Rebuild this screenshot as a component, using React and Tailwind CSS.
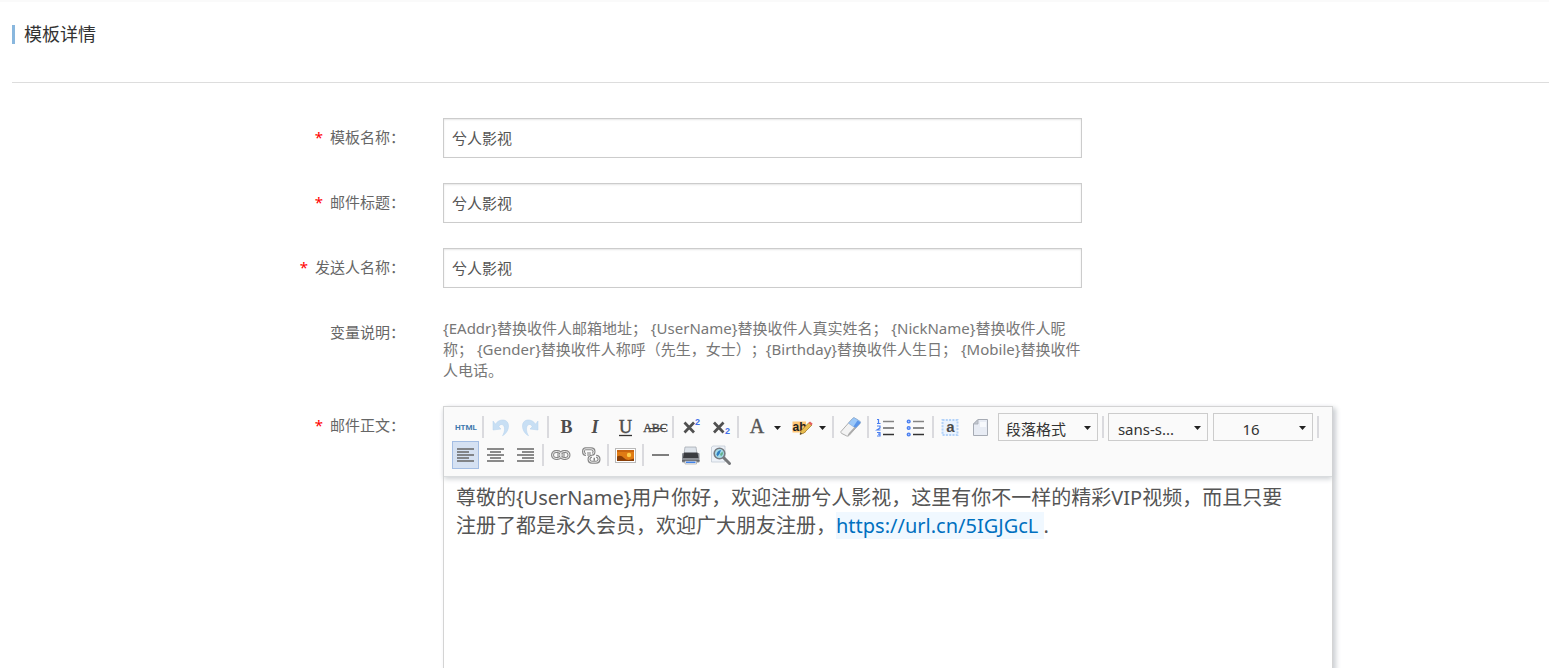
import React, { useState } from 'react'
import clsx from 'clsx'

const fields = [
  { id: 'templateName', label: '模板名称' },
  { id: 'mailTitle', label: '邮件标题' },
  { id: 'senderName', label: '发送人名称' },
]

const SERIF = '"Liberation Serif", serif'
const SANS = '"Liberation Sans", sans-serif'

const alignPaths = {
  left: 'M5 8h17M5 11h12M5 14h17M5 17h12M5 20h17',
  center: 'M5 8h17M8 11h11M5 14h17M8 17h11M5 20h17',
  right: 'M5 8h17M10 11h12M5 14h17M10 17h12M5 20h17',
}

const undoPath =
  'M6 8l2.500 3.200C11.500 5.500 21.500 5 21.500 13c0 5-3.500 8.500-6 9.700 2.500-3.700 3-10.200-.5-11.200-1.500-.4-2.700.9-3.200 2.300L14 16l-8 1z'

// Every drawing sits on a 27x28 button face
const glyphs = {
  html: (
    <text x="14" y="17" textAnchor="middle" fontFamily="Roboto, sans-serif" fontSize="8" fontWeight="700" fill="#3f78ad">HTML</text>
  ),
  undo: <path d={undoPath} fill="#c8dff4" stroke="#b5d1ec" strokeWidth=".5" />,
  redo: <path d={undoPath} transform="translate(27 0) scale(-1 1)" fill="#c8dff4" stroke="#b5d1ec" strokeWidth=".5" />,
  bold: (
    <text x="14.500" y="20" textAnchor="middle" fontFamily={SERIF} fontSize="18" fontWeight="700" fill="#4c4c4c">B</text>
  ),
  italic: (
    <text x="13" y="20" textAnchor="middle" fontFamily={SERIF} fontSize="18" fontWeight="700" fontStyle="italic" fill="#4c4c4c">I</text>
  ),
  underline: (
    <>
      <text x="13.500" y="20" textAnchor="middle" fontFamily={SERIF} fontSize="18" fontWeight="400" stroke="#4c4c4c" strokeWidth=".5" fill="#4c4c4c">U</text>
      <path d="M7 22.500h13" stroke="#333" strokeWidth="1.300" />
    </>
  ),
  strike: (
    <>
      <text x="13.500" y="19" textAnchor="middle" fontFamily={SERIF} fontSize="12" stroke="#4c4c4c" strokeWidth=".4" fill="#4c4c4c">ABC</text>
      <path d="M4 15.500h20" stroke="#444" strokeWidth="1" />
    </>
  ),
  sup: (
    <>
      <path d="M7.500 9.500l9.500 10M17 9.500l-9.500 10" stroke="#505050" strokeWidth="2.700" />
      <text x="18" y="12" fontFamily={SANS} fontSize="9" fontWeight="700" fill="#3f6fe8">2</text>
    </>
  ),
  sub: (
    <>
      <path d="M7 9.500l9.500 10M16.500 9.500L7 19.500" stroke="#505050" strokeWidth="2.700" />
      <text x="18" y="21" fontFamily={SANS} fontSize="9" fontWeight="700" fill="#3f6fe8">2</text>
    </>
  ),
  color: (
    <text x="15" y="20" textAnchor="middle" fontFamily={SERIF} fontSize="20" stroke="#555" strokeWidth=".4" fill="#555">A</text>
  ),
  highlight: (
    <>
      <path d="M5.500 8.500h13.500v11H5.500z" fill="#ffc675" />
      <text x="5.500" y="18" fontFamily={SANS} fontSize="12" fontWeight="700" fill="#222">ab</text>
      <path d="M13 21.500l1.200-4L22 9.500l3 2.500-8 8z" fill="#e8bd4f" stroke="#9a7328" strokeWidth=".7" />
      <path d="M21.500 10l1.500-1.500 2.700 2.200-1.400 1.800z" fill="#e25f5f" />
      <path d="M13 21.500l.6-2 1.400 1.200z" fill="#333" />
    </>
  ),
  eraser: (
    <>
      <path d="M4 18.500L15.500 5.500q1-1 2.200-.4l4.800 3q1.500 1 .5 2.300L12 22.500q-1 1-2.200.5l-5-2.500q-1.500-.8-.8-2z" fill="#f3f3f3" stroke="#a5a5a5" strokeWidth=".9" />
      <path d="M11.500 10.200L16 5.200q.8-.7 1.700-.1l5 3q1.200.9.3 2.100l-4.500 4.900z" fill="#9cc8f8" stroke="#84aede" strokeWidth=".7" />
      <path d="M18.500 15.100l-2-1.500 4-6 2.500 1.500q.8.500 0 1.400z" fill="#5b96ea" />
      <path d="M10.500 22.500l1.500-2.500 6-6.500.5 1.500-6.500 7.500z" fill="#aaa" />
    </>
  ),
  ol: (
    <>
      <path d="M5 6.500h1.500V10.500M5 10.500h3.500M5 13h3v2l-3 2h3.500M5 19.500h3v1.700H6h2V23H5" fill="none" stroke="#4a7ff0" strokeWidth="1.200" />
      <path d="M11 8.500h11" stroke="#858585" strokeWidth="1.500" />
      <path d="M11 15h11" stroke="#666" strokeWidth="1.500" />
      <path d="M11 21.500h11" stroke="#333" strokeWidth="1.500" />
    </>
  ),
  ul: (
    <>
      <g fill="#b6cbfb" stroke="#4a7ff0" strokeWidth="1.400">
        <circle cx="6.700" cy="8.500" r="1.400" />
        <circle cx="6.700" cy="15" r="1.400" />
        <circle cx="6.700" cy="21.500" r="1.400" />
      </g>
      <path d="M11 8.500h11" stroke="#858585" strokeWidth="1.500" />
      <path d="M11 15h11" stroke="#666" strokeWidth="1.500" />
      <path d="M11 21.500h11" stroke="#333" strokeWidth="1.500" />
    </>
  ),
  selectAll: (
    <>
      <rect x="5" y="6.500" width="16" height="16" fill="#eaf3fe" />
      <rect x="5.500" y="7" width="15" height="15" fill="none" stroke="#b3d2f8" strokeWidth="2" strokeDasharray="2 1.300" />
      <text x="13.500" y="18.500" textAnchor="middle" fontFamily={SANS} fontSize="15" fontWeight="700" fill="#4a4a4a">a</text>
    </>
  ),
  page: (
    <>
      <path d="M11 6.500H20.500V22.500H6.500V11z" fill="#e8ecf4" stroke="#a6abb4" />
      <path d="M6.500 11H11V6.500z" fill="#c3c8d1" stroke="#a6abb4" strokeWidth=".8" />
      <path d="M13 9h6v5h-6z" fill="#f7f9fc" />
    </>
  ),
  alignLeft: <path d={alignPaths.left} stroke="#666" strokeWidth="1.300" />,
  alignCenter: <path d={alignPaths.center} stroke="#666" strokeWidth="1.300" />,
  alignRight: <path d={alignPaths.right} stroke="#666" strokeWidth="1.300" />,
  link: (
    <g fill="none">
      <g stroke="#858585" strokeWidth="3">
        <rect x="5.500" y="10.500" width="8.500" height="7" rx="3.500" />
        <rect x="13.500" y="10.500" width="8.500" height="7" rx="3.500" />
        <path d="M10 14h8" />
      </g>
      <g stroke="#e9e9e9" strokeWidth="1">
        <rect x="5.500" y="10.500" width="8.500" height="7" rx="3.500" />
        <rect x="13.500" y="10.500" width="8.500" height="7" rx="3.500" />
        <path d="M10 14h8" />
      </g>
    </g>
  ),
  unlink: (
    <g fill="none">
      <g stroke="#858585" strokeWidth="3">
        <path d="M9 13.500q-2.500 0-2.500-3T9 7.800h5q3 0 3 2.700t-2 2.700" />
        <path d="M12 11v4" />
        <path d="M15 15.200q-3 0-3 3t3 3h4q3 0 3-3t-3-3" />
        <path d="M16.500 18.300h1.500" />
      </g>
      <g stroke="#ededed" strokeWidth="1">
        <path d="M9 13.500q-2.500 0-2.500-3T9 7.800h5q3 0 3 2.700t-2 2.700" />
        <path d="M12 11v4" />
        <path d="M15 15.200q-3 0-3 3t3 3h4q3 0 3-3t-3-3" />
      </g>
    </g>
  ),
  image: (
    <>
      <rect x="3.500" y="7.500" width="20" height="14" fill="#fff" stroke="#b9b9b9" />
      <rect x="5" y="9" width="17" height="11" fill="#e07b14" />
      <path d="M5 9h17v2H5z" fill="#c9640f" />
      <circle cx="17" cy="14" r="2.200" fill="#ffcf4a" />
      <path d="M5 15.500q4-2 7 1.500t10 .5V20H5z" fill="#8a3f08" />
    </>
  ),
  hr: <path d="M5 14h17" stroke="#555" strokeWidth="1.500" />,
  print: (
    <>
      <path d="M8 6h11l1 7H7z" fill="#dde3ea" stroke="#a6abb2" strokeWidth=".8" />
      <rect x="5" y="12" width="17.500" height="9.500" rx="1" fill="#8b8f95" />
      <path d="M7 11.500h13.500l1 5.500H6z" fill="#3a3c40" />
      <path d="M5 19h17.500v1.500H5z" fill="#65696f" />
      <path d="M8 20h11.500v3H8z" fill="#f6f6f6" stroke="#9a9a9a" strokeWidth=".6" />
      <path d="M9 21.300h9.500" stroke="#3f83ea" strokeWidth="1.500" />
    </>
  ),
  preview: (
    <>
      <path d="M4.500 6L6 5h12v16H4.500z" fill="#edf2f8" stroke="#c2cad4" strokeWidth=".8" />
      <path d="M16.500 16.500l6 6" stroke="#75777a" strokeWidth="3" strokeLinecap="round" />
      <circle cx="12.500" cy="12.500" r="5.300" fill="#a6dcea" stroke="#777b80" strokeWidth="1.600" />
      <path d="M9.500 13.500q.5-4 4.500-4.500-1 4-3.500 6.500z" fill="#2f7fc2" />
      <path d="M13 13l2.500-2.500.5 2.500-2 2.500z" fill="#63b08c" />
    </>
  ),
}

const toolbar = [
  { icon: 'html', title: '源代码' },
  '|',
  { icon: 'undo', title: '撤销' },
  { icon: 'redo', title: '重做' },
  '|',
  { icon: 'bold', title: '加粗' },
  { icon: 'italic', title: '斜体' },
  { icon: 'underline', title: '下划线' },
  { icon: 'strike', title: '删除线' },
  '|',
  { icon: 'sup', title: '上标' },
  { icon: 'sub', title: '下标' },
  '|',
  { icon: 'color', title: '字体颜色', arrow: true },
  { icon: 'highlight', title: '背景色', arrow: true },
  '|',
  { icon: 'eraser', title: '清除格式' },
  '|',
  { icon: 'ol', title: '有序列表' },
  { icon: 'ul', title: '无序列表' },
  '|',
  { icon: 'selectAll', title: '全选' },
  { icon: 'page', title: '清空文档' },
  { select: '段落格式', title: '段落格式' },
  '|',
  { select: 'sans-s...', title: '字体' },
  { select: '16', title: '字号' },
  '|',
  { icon: 'alignLeft', title: '居左对齐' },
  { icon: 'alignCenter', title: '居中对齐' },
  { icon: 'alignRight', title: '居右对齐' },
  '|',
  { icon: 'link', title: '超链接' },
  { icon: 'unlink', title: '取消链接' },
  '|',
  { icon: 'image', title: '图片' },
  '|',
  { icon: 'hr', title: '分隔线' },
  { icon: 'print', title: '打印' },
  { icon: 'preview', title: '预览' },
]

function Arrow({ className }) {
  return (
    <svg viewBox="0 0 7 4" className={clsx('h-1 w-[7px]', className)}>
      <path d="M0 0h7L3.500 4z" fill="#222" />
    </svg>
  )
}

function ToolButton({ item, active, onClick }) {
  return (
    <button
      type="button"
      title={item.title}
      aria-label={item.title}
      onClick={onClick}
      className={clsx(
        'ml-0.5 mr-px flex h-7 items-center',
        item.arrow ? 'w-[42px]' : 'w-[27px]',
        active && 'bg-[#d5e1f2] outline outline-1 -outline-offset-1 outline-[#a3bde3]'
      )}
    >
      <svg viewBox="0 0 27 28" className="h-7 w-[27px] shrink-0">
        {glyphs[item.icon]}
      </svg>
      {item.arrow && <Arrow className="ml-[5px] mt-0.5" />}
    </button>
  )
}

function ToolSelect({ item }) {
  return (
    <div className="relative ml-[3px] mr-0.5">
      <select
        aria-label={item.title}
        className="h-7 w-[100px] appearance-none border border-[#ccc] bg-[#fafafa] pr-6 pt-1 text-center text-[15px] leading-5 text-[#333] outline-none"
      >
        <option>{item.select}</option>
      </select>
      <Arrow className="pointer-events-none absolute right-[7px] top-[13px]" />
    </div>
  )
}

function Editor() {
  const [align, setAlign] = useState('alignLeft')

  return (
    <div className="w-full max-w-[890px] border border-[#d4d4d4] shadow-[3px_2px_5px_#cdd0d4]">
      <div role="toolbar" className="relative flex flex-wrap border-b border-[#d9dcde] bg-[#fafafa] px-1.5 pb-[7px] pt-1.5 shadow-[0_2px_5px_#cdd0d4]">
        {toolbar.map((item, i) => {
          if (item === '|') {
            return <span key={i} className="ml-0.5 mr-px mt-[3px] h-[22px] w-0.5 bg-[#dadade]" />
          }
          if (item.select) return <ToolSelect key={i} item={item} />
          return (
            <ToolButton
              key={i}
              item={item}
              active={item.icon === align}
              onClick={() => item.icon.startsWith('align') && setAlign(item.icon)}
            />
          )
        })}
      </div>
      <div
        contentEditable
        suppressContentEditableWarning
        role="textbox"
        aria-label="邮件正文"
        className="min-h-[400px] bg-white pl-3 pr-9 pt-[7px] text-xl leading-7 text-[#555] outline-none"
      >
        {'尊敬的{UserName}用户你好，欢迎注册兮人影视，这里有你不一样的精彩VIP视频，而且只要注册了都是永久会员，欢迎广大朋友注册，'}
        <a href="https://url.cn/5IGJGcL" className="bg-[#f0f8ff] text-[#0070c0]">https://url.cn/5IGJGcL </a>.
      </div>
    </div>
  )
}

function Row({ id, label, required, children }) {
  return (
    <div className="flex items-start">
      <label htmlFor={id} className="w-[393px] shrink-0 text-right leading-[38px]">
        {required && <span className="mr-[7px] text-[#f00]">*</span>}
        {label}：
      </label>
      <div className="ml-[38px] min-w-0 flex-1">{children}</div>
    </div>
  )
}

export default function App() {
  const [values, setValues] = useState({
    templateName: '兮人影视',
    mailTitle: '兮人影视',
    senderName: '兮人影视',
  })

  return (
    <div className="h-screen overflow-hidden border-t-2 border-[#fafafa] bg-white pl-3 font-['Noto_Sans','Noto_Sans_CJK_SC',sans-serif] text-[15px] text-[#666] [text-spacing-trim:space-all]">
      <header className="flex h-[81px] items-start border-b border-[#ddd] pt-[23px]">
        <h1 className="flex h-[19px] items-center border-l-[3px] border-[#89b7de] pb-0.5 pl-[9px] text-lg text-[#333]">
          模板详情
        </h1>
      </header>

      <form className="flex flex-col gap-[25px] pt-[35px]">
        {fields.map((field) => (
          <Row key={field.id} id={field.id} label={field.label} required>
            <input
              id={field.id}
              type="text"
              value={values[field.id]}
              onChange={(e) => setValues({ ...values, [field.id]: e.target.value })}
              className="block h-10 w-full max-w-[639px] border border-[#ccc] px-2 pb-0.5 text-[#555] shadow-[inset_0_1px_2px_#e6e6e6] outline-none"
            />
          </Row>
        ))}

        <Row label="变量说明">
          <p className="max-w-[639px] pt-[5px] leading-[21px] text-[#777]">
            {'{EAddr}替换收件人邮箱地址； {UserName}替换收件人真实姓名； {NickName}替换收件人昵称； {Gender}替换收件人称呼（先生，女士）；{Birthday}替换收件人生日； {Mobile}替换收件人电话。'}
          </p>
        </Row>

        <Row label="邮件正文" required>
          <Editor />
        </Row>
      </form>
    </div>
  )
}
